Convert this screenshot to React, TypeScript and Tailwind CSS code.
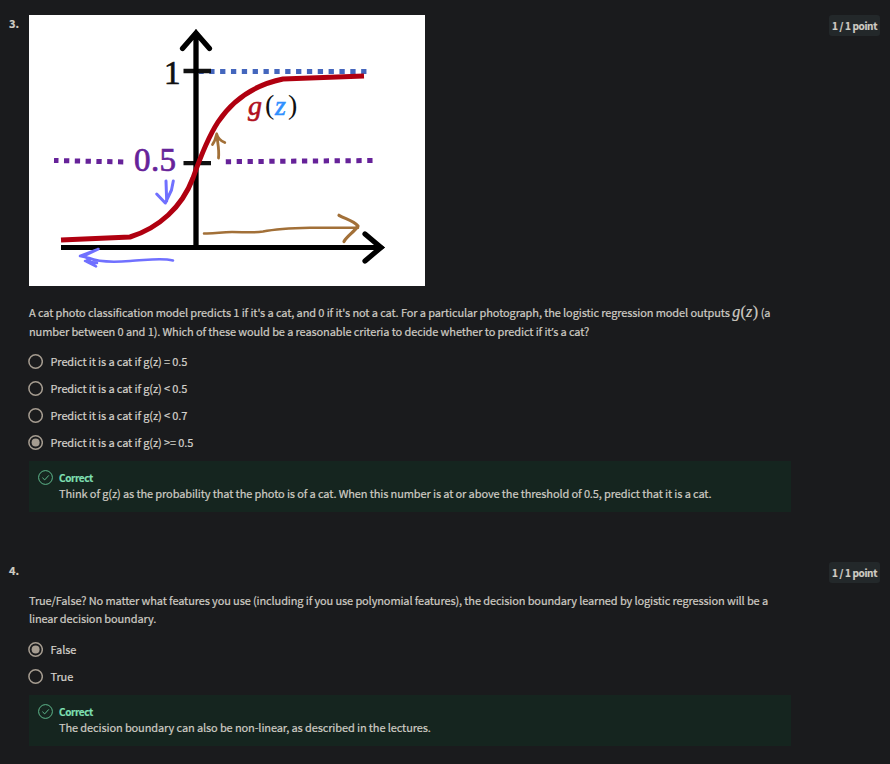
import React from "react";

function Chart() {
  return (
    <svg className="block h-[271px] w-[396px] bg-white" viewBox="29 15 396 271" fill="none">
      <path d="M199 71.6H367" stroke="#4466bd" strokeWidth="5" strokeDasharray="5.3 5.55" strokeDashoffset="0.6" />
      <path d="M54 160.5L125 162" stroke="#662299" strokeWidth="5" strokeDasharray="5.3 5.5" strokeDashoffset="0.8" />
      <path d="M225.8 161.7L373 160.5" stroke="#662299" strokeWidth="5" strokeDasharray="5.3 5.58" />
      <path d="M183.5 71H211M183.5 163.2H211" stroke="#111" strokeWidth="4.3" />
      <path d="M196 248V34" stroke="#000" strokeWidth="5.3" />
      <path d="M182.5 48.5L196 33L209.5 48.5" stroke="#000" strokeWidth="5.2" strokeLinecap="round" />
      <path d="M196 29L189 40H203Z" fill="#000" />
      <path d="M61 247.4H380" stroke="#000" strokeWidth="5" />
      <path d="M365 234L381 247.4L365 261" stroke="#000" strokeWidth="5.2" strokeLinecap="round" />
      <path d="M385 247.4L374 240V255Z" fill="#000" />
      <path d="M61 240L130 237C159 228 182 207 193 178C200 158 207 139 218 122C232 101 254 85 283 79L364 76" stroke="#b00010" strokeWidth="5" />
      <g fontSize="33" strokeWidth="0.7" className="font-['Liberation_Serif',serif]">
        <text x="164" y="84" fill="#111" stroke="#111">1</text>
        <text x="134" y="171" fill="#662299" stroke="#662299" textLength="42">0.5</text>
      </g>
      <g fontSize="28" strokeWidth="0.6" className="font-['Liberation_Serif',serif]">
        <text x="248" y="115" fill="#b01020" stroke="#b01020" fontStyle="italic">g</text>
        <text x="265" y="114" fill="#111">(</text>
        <text x="275" y="115" fill="#3090ff" stroke="#3090ff" fontStyle="italic">z</text>
        <text x="288" y="114" fill="#111">)</text>
      </g>
      <g stroke="#a27038" strokeWidth="2.5" strokeLinecap="round" strokeLinejoin="round">
        <path d="M212.5 144.5C215 141 216 137 216.7 134C218 139 221 141 224.8 142.5M216.7 134C217.5 143 219.5 149 218.5 158" strokeWidth="2.8" />
        <path d="M204 233.5C216 234 220 232 232 232C244 232 253 233 263 231.5C278 228.5 296 228 310 227.7H358" />
        <path d="M339 215.3C345 219 353 220 358 226C354 232 347 236 344 241.5" strokeWidth="3.2" />
      </g>
      <g stroke="#7070ff" strokeWidth="2.5" strokeLinecap="round" strokeLinejoin="round">
        <path d="M166 181L166.7 201M173.3 181L171.5 190L165.3 203L156.7 194" strokeWidth="3" />
        <path d="M173 260.5C160 257.5 145 260.5 130 261C111 262.5 98 262 89 258L80 256L98.5 249L84 256L96 266.5L85 261L97 263" />
      </g>
    </svg>
  );
}

function Radio({ label, checked = false }: { label: string; checked?: boolean }) {
  return (
    <label className="-ml-px flex h-[27px] items-center gap-[7px] text-[#d5d2cb]">
      <svg className="size-[15px] shrink-0" viewBox="0 0 15 15" fill="none">
        <circle cx="7.6" cy="7.5" r="6.7" stroke="#a59c90" strokeWidth="1.5" />
        {checked && <circle cx="7.6" cy="7.5" r="4" fill="#a59c90" />}
      </svg>
      <span className="-mt-px whitespace-nowrap pl-[0.5px] text-[11px] leading-[18px] tracking-[-0.11px]">{label}</span>
    </label>
  );
}

function Feedback({ text }: { text: string }) {
  return (
    <div className="flex h-[51px] w-[762px] gap-[6px] bg-[#15251f] pt-[9px] pl-[9px]">
      <svg className="size-[15px]" viewBox="0 0 15 15" fill="none" stroke="#66c898" strokeWidth="0.9">
        <circle cx="7.5" cy="7.5" r="6.9" />
        <path d="M4.4 7.7L6.7 9.9L10.8 5.4" />
      </svg>
      <div className="-mt-px whitespace-nowrap text-[11px]">
        <p className="h-4 text-[10px] font-bold leading-[17px] tracking-[-0.4px] text-[#7edfb0]">Correct</p>
        <p className="leading-4 tracking-[-0.115px]">{text}</p>
      </div>
    </div>
  );
}

function Question({ number, children }: { number: string; children: React.ReactNode }) {
  return (
    <section className="flex">
      <span className="-mt-px w-[29px] shrink-0 pl-[9px] text-[11px] font-bold leading-[18px]">{number}</span>
      <div className="w-[800px] shrink-0">{children}</div>
      <span className="flex h-[21px] w-[51px] items-center justify-center whitespace-nowrap rounded-[3px] bg-[#23282a] pb-px text-[10px] font-bold tracking-[-0.35px]">
        1 / 1 point
      </span>
    </section>
  );
}

export default function App() {
  return (
    <main className="h-[764px] w-[890px] overflow-hidden bg-[#1a1b1d] pt-[15px] font-['Noto_Sans_CJK_SC',sans-serif] text-[#cfccc4] [-webkit-text-stroke:0.2px]">
      <Question number="3.">
        <Chart />
        <div className="mt-[17px] whitespace-nowrap text-[11px] leading-[19px] tracking-[-0.113px]">
          <p className="h-[19px]">
            A cat photo classification model predicts 1 if it's a cat, and 0 if it's not a cat. For a particular photograph, the logistic regression model outputs{" "}
            <span className="font-['Liberation_Serif',serif] text-[16px] leading-none tracking-[0.3px]"><i>g</i>(<i>z</i>)</span> (a
          </p>
          <p>
            number between 0 and 1). Which of these would be a reasonable criteria to decide whether to predict if it
            <span className="font-['Open_Sans',sans-serif]">’</span>s a cat?
          </p>
        </div>
        <div className="mt-[7px] mb-[5px]">
          <Radio label="Predict it is a cat if g(z) = 0.5" />
          <Radio label="Predict it is a cat if g(z) < 0.5" />
          <Radio label="Predict it is a cat if g(z) < 0.7" />
          <Radio label="Predict it is a cat if g(z) >= 0.5" checked />
        </div>
        <Feedback text="Think of g(z) as the probability that the photo is of a cat. When this number is at or above the threshold of 0.5, predict that it is a cat." />
      </Question>
      <div className="h-[50px]" />
      <Question number="4.">
        <div className="mt-[29px] whitespace-nowrap text-[11px] leading-[18px] tracking-[-0.12px]">
          <p>True/False? No matter what features you use (including if you use polynomial features), the decision boundary learned by logistic regression will be a</p>
          <p>linear decision boundary.</p>
        </div>
        <div className="mt-[9px] mb-[5px]">
          <Radio label="False" checked />
          <Radio label="True" />
        </div>
        <Feedback text="The decision boundary can also be non-linear, as described in the lectures." />
      </Question>
    </main>
  );
}
